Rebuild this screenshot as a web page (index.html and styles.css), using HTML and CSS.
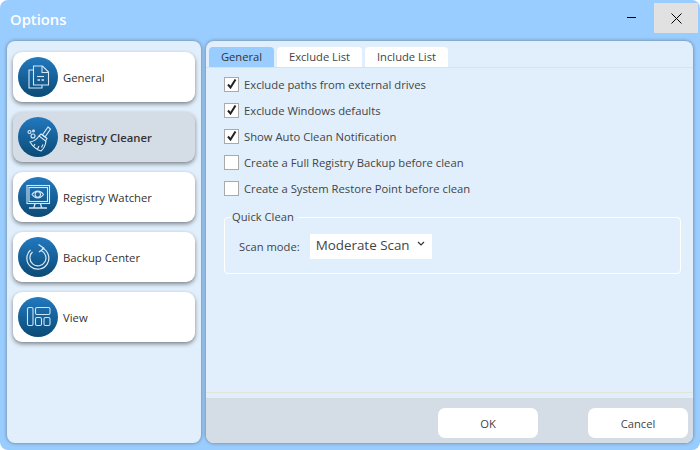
FILE: index.html
```html
<!DOCTYPE html>
<html lang="en">
<head>
<meta charset="utf-8">
<title>Options</title>
<link rel="stylesheet" href="styles.css">
</head>
<body>
<svg width="0" height="0" class="defs">
  <defs>
    <linearGradient id="disc" x1="0" y1="0" x2="0" y2="1">
      <stop offset="0" stop-color="#2279bf"/>
      <stop offset="1" stop-color="#0b4a75"/>
    </linearGradient>
  </defs>
</svg>
<div class="window">
  <header class="titlebar">
    <h1 class="title">Options</h1>
    <div class="controls">
      <button class="ctl ctl-min" aria-label="Minimize"><svg width="10" height="2" viewBox="0 0 10 2"><rect width="9" height="1" fill="#000"/></svg></button>
      <button class="ctl ctl-close" aria-label="Close"><svg width="11" height="11" viewBox="0 0 11 11"><path d="M.5.5l10 10M10.5.5l-10 10" stroke="#000" stroke-width="1" fill="none"/></svg></button>
    </div>
  </header>
  <div class="panes">
    <nav class="sidebar">
      <div class="card">
        <svg class="disc" viewBox="0 0 40 40"><circle cx="20" cy="20" r="20" fill="url(#disc)"/><g fill="none" stroke="#d6e6f3" stroke-width="1.100"><path d="M15.500 9h9l6 6v13h-15z"/><path d="M24 9v6.500h6.500"/><path d="M15.500 13h-4.500v18h13v-3"/><path d="M19 19.500h7"/><path d="M19.500 23h2.500M23.500 23h2.500" stroke-width="1.400"/></g></svg>
        <span class="card-label">General</span>
      </div>
      <div class="card card-active">
        <svg class="disc" viewBox="0 0 40 40"><circle cx="20" cy="20" r="20" fill="url(#disc)"/><g fill="none" stroke="#dcebf6" stroke-width="1.100"><path d="M30 10l2.500 2-5.500 8-2.500-2z"/><path d="M23 17l6 4.500-1.500 2.500-6.500-5z"/><path d="M21 19c-2 3-5 5.500-9 6 2.500 4 6 7.500 11 9 3-2.500 4.500-6 5-10"/><path d="M17 27l-1.500 2.500M21 29l-1.500 3M25 27.500l-1.500 3"/><circle cx="11.500" cy="15" r="1.500"/><circle cx="15" cy="19" r="2"/><circle cx="15.500" cy="14" r=".9"/></g></svg>
        <span class="card-label">Registry Cleaner</span>
      </div>
      <div class="card">
        <svg class="disc" viewBox="0 0 40 40"><circle cx="20" cy="20" r="20" fill="url(#disc)"/><g fill="none" stroke="#d6e6f3" stroke-width="1.100"><rect x="9" y="8.500" width="22.500" height="18"/><rect x="11" y="10.500" width="18.500" height="14"/><path d="M14 17.500c3-4.500 8.500-4.500 11.500 0-3 4.500-8.500 4.500-11.500 0z"/><circle cx="19.800" cy="17.500" r="2.700"/><path d="M17 26.500l-1 4M22.500 26.500l1 4M11 31h18" stroke-width="1.300"/></g></svg>
        <span class="card-label">Registry Watcher</span>
      </div>
      <div class="card">
        <svg class="disc" viewBox="0 0 40 40"><circle cx="20" cy="20" r="20" fill="url(#disc)"/><g fill="none" stroke="#dcebf6" stroke-width="1.200"><path d="M24 11a11 11 0 1 1-11.500 2"/><path d="M23 13.500a8 8 0 1 1-8.500 1.500"/><path d="M20.500 7.500l5.500 3.800-5 3.700" stroke-linejoin="round"/></g></svg>
        <span class="card-label">Backup Center</span>
      </div>
      <div class="card">
        <svg class="disc" viewBox="0 0 40 40"><circle cx="20" cy="20" r="20" fill="url(#disc)"/><g fill="none" stroke="#cfe3f3" stroke-width="1.100"><rect x="9.500" y="10.500" width="5.500" height="18" rx="1.500"/><rect x="17.500" y="10.500" width="14.500" height="7" rx="1.500"/><rect x="17.500" y="20.500" width="6" height="8" rx="1.500"/><rect x="26" y="20.500" width="6" height="8" rx="1.500"/></g></svg>
        <span class="card-label">View</span>
      </div>
    </nav>
    <main class="main">
      <div class="tabs">
        <div class="tab tab-general tab-active">General</div>
        <div class="tab tab-exclude">Exclude List</div>
        <div class="tab tab-include">Include List</div>
      </div>
      <section class="tabpage">
        <label class="check"><span class="box"><svg width="10" height="10" viewBox="0 0 10 10"><path d="M1 5.500l2.500 3 5-8" fill="none" stroke="#222" stroke-width="2"/></svg></span>Exclude paths from external drives</label>
        <label class="check"><span class="box"><svg width="10" height="10" viewBox="0 0 10 10"><path d="M1 5.500l2.500 3 5-8" fill="none" stroke="#222" stroke-width="2"/></svg></span>Exclude Windows defaults</label>
        <label class="check"><span class="box"><svg width="10" height="10" viewBox="0 0 10 10"><path d="M1 5.500l2.500 3 5-8" fill="none" stroke="#222" stroke-width="2"/></svg></span>Show Auto Clean Notification</label>
        <label class="check"><span class="box"></span>Create a Full Registry Backup before clean</label>
        <label class="check"><span class="box"></span>Create a System Restore Point before clean</label>
        <fieldset class="group">
          <legend class="group-title">Quick Clean</legend>
          <div class="scan-row">
            <span class="scan-label">Scan mode:</span>
            <div class="select"><span>Moderate Scan</span><svg class="chevron" width="8" height="5" viewBox="0 0 8 5"><path d="M1 1l3 3 3-3" fill="none" stroke="#333" stroke-width="1.200"/></svg></div>
          </div>
        </fieldset>
      </section>
      <footer class="footer">
        <button class="btn">OK</button>
        <button class="btn">Cancel</button>
      </footer>
    </main>
  </div>
</div>
</body>
</html>
```
FILE: styles.css
```css
* { box-sizing: border-box; }
html, body { margin: 0; padding: 0; background: #fff; }
.defs { position: absolute; }
body { width: 700px; height: 450px; overflow: hidden; font-family: "Open Sans", "Noto Sans", sans-serif; color: #333; }
.window { width: 700px; height: 450px; background: #99ccff; border-radius: 8px; display: flex; flex-direction: column; }
.titlebar { height: 41px; display: flex; justify-content: space-between; align-items: flex-start; }
.title { margin: 9px 0 0 10px; font-size: 14.8px; line-height: 21px; font-weight: 600; color: #fff; }
.controls { display: flex; margin: 3px 2px 0 0; }
.ctl { width: 44px; height: 30px; border: 0; padding: 0; background: transparent; display: flex; align-items: center; justify-content: center; }
.ctl-close { background: #e1e1e1; }
.panes { display: flex; gap: 5px; padding: 0 7px 7px; height: 409px; }
.sidebar { width: 194px; background: #e1effc; border-radius: 8px; box-shadow: 0 0 3px 1px rgba(90,90,90,.45); padding: 11px 6px; display: flex; flex-direction: column; gap: 10px; }
.card { height: 50px; background: #fff; border-radius: 9px; box-shadow: 0 2px 4px rgba(0,0,0,.45); display: flex; align-items: center; padding-left: 5px; gap: 5px; }
.card-active { background: #d4dce6; }
.card-active .card-label { font-weight: 600; }
.disc { width: 40px; height: 40px; flex: none; }
.card-label { font-size: 11.3px; color: #333; }
.main { flex: 1; background: #e1effc; border-radius: 8px; box-shadow: 0 0 3px 1px rgba(90,90,90,.45); display: flex; flex-direction: column; overflow: hidden; }
.tabs { display: flex; gap: 3px; padding: 6px 0 0 3px; height: 27px; border-bottom: 1px solid #d4e3f2; }
.tab { height: 20px; font-size: 11.2px; line-height: 20px; text-align: center; background: #fff; border-radius: 4px 4px 0 0; color: #444; }
.tab-general { width: 65px; }
.tab-exclude { width: 85px; }
.tab-include { width: 83px; }
.tab-active { background: #99ccff; color: #333; }
.tabpage { flex: 1; padding: 3px 12px 0 18px; display: flex; flex-direction: column; border-bottom: 1px solid #e4e4dc; }
.check { display: flex; align-items: center; height: 26px; font-size: 11.25px; color: #444; gap: 5px; }
.box { width: 15px; height: 15px; background: #fff; border: 1px solid #aaa; display: flex; align-items: center; justify-content: center; flex: none; }
.group { margin: 8px 0 0; padding: 0 0 0 14px; height: 65px; border: 1px solid #fff; border-radius: 4px; min-width: 0; }
.group-title { margin-left: -8px; padding: 0 4px 0 1px; font-size: 11.2px; line-height: 16px; color: #444; }
.scan-row { display: flex; align-items: center; gap: 10px; margin-top: 9px; }
.scan-label { font-size: 11.2px; color: #444; }
.select { width: 122px; height: 25px; background: #fff; display: flex; align-items: center; justify-content: space-between; padding: 0 7px 3px 6px; font-size: 13.4px; color: #444; }
.chevron { margin-bottom: 3px; }
.footer { height: 45px; margin-top: 5px; background: #d4dce6; display: flex; justify-content: flex-end; align-items: center; gap: 50px; padding: 5px 5px 0 0; }
.btn { width: 100px; height: 30px; background: #fff; border: 0; border-radius: 7px; font: 11.2px "Open Sans", "Noto Sans", sans-serif; color: #444; }
```
